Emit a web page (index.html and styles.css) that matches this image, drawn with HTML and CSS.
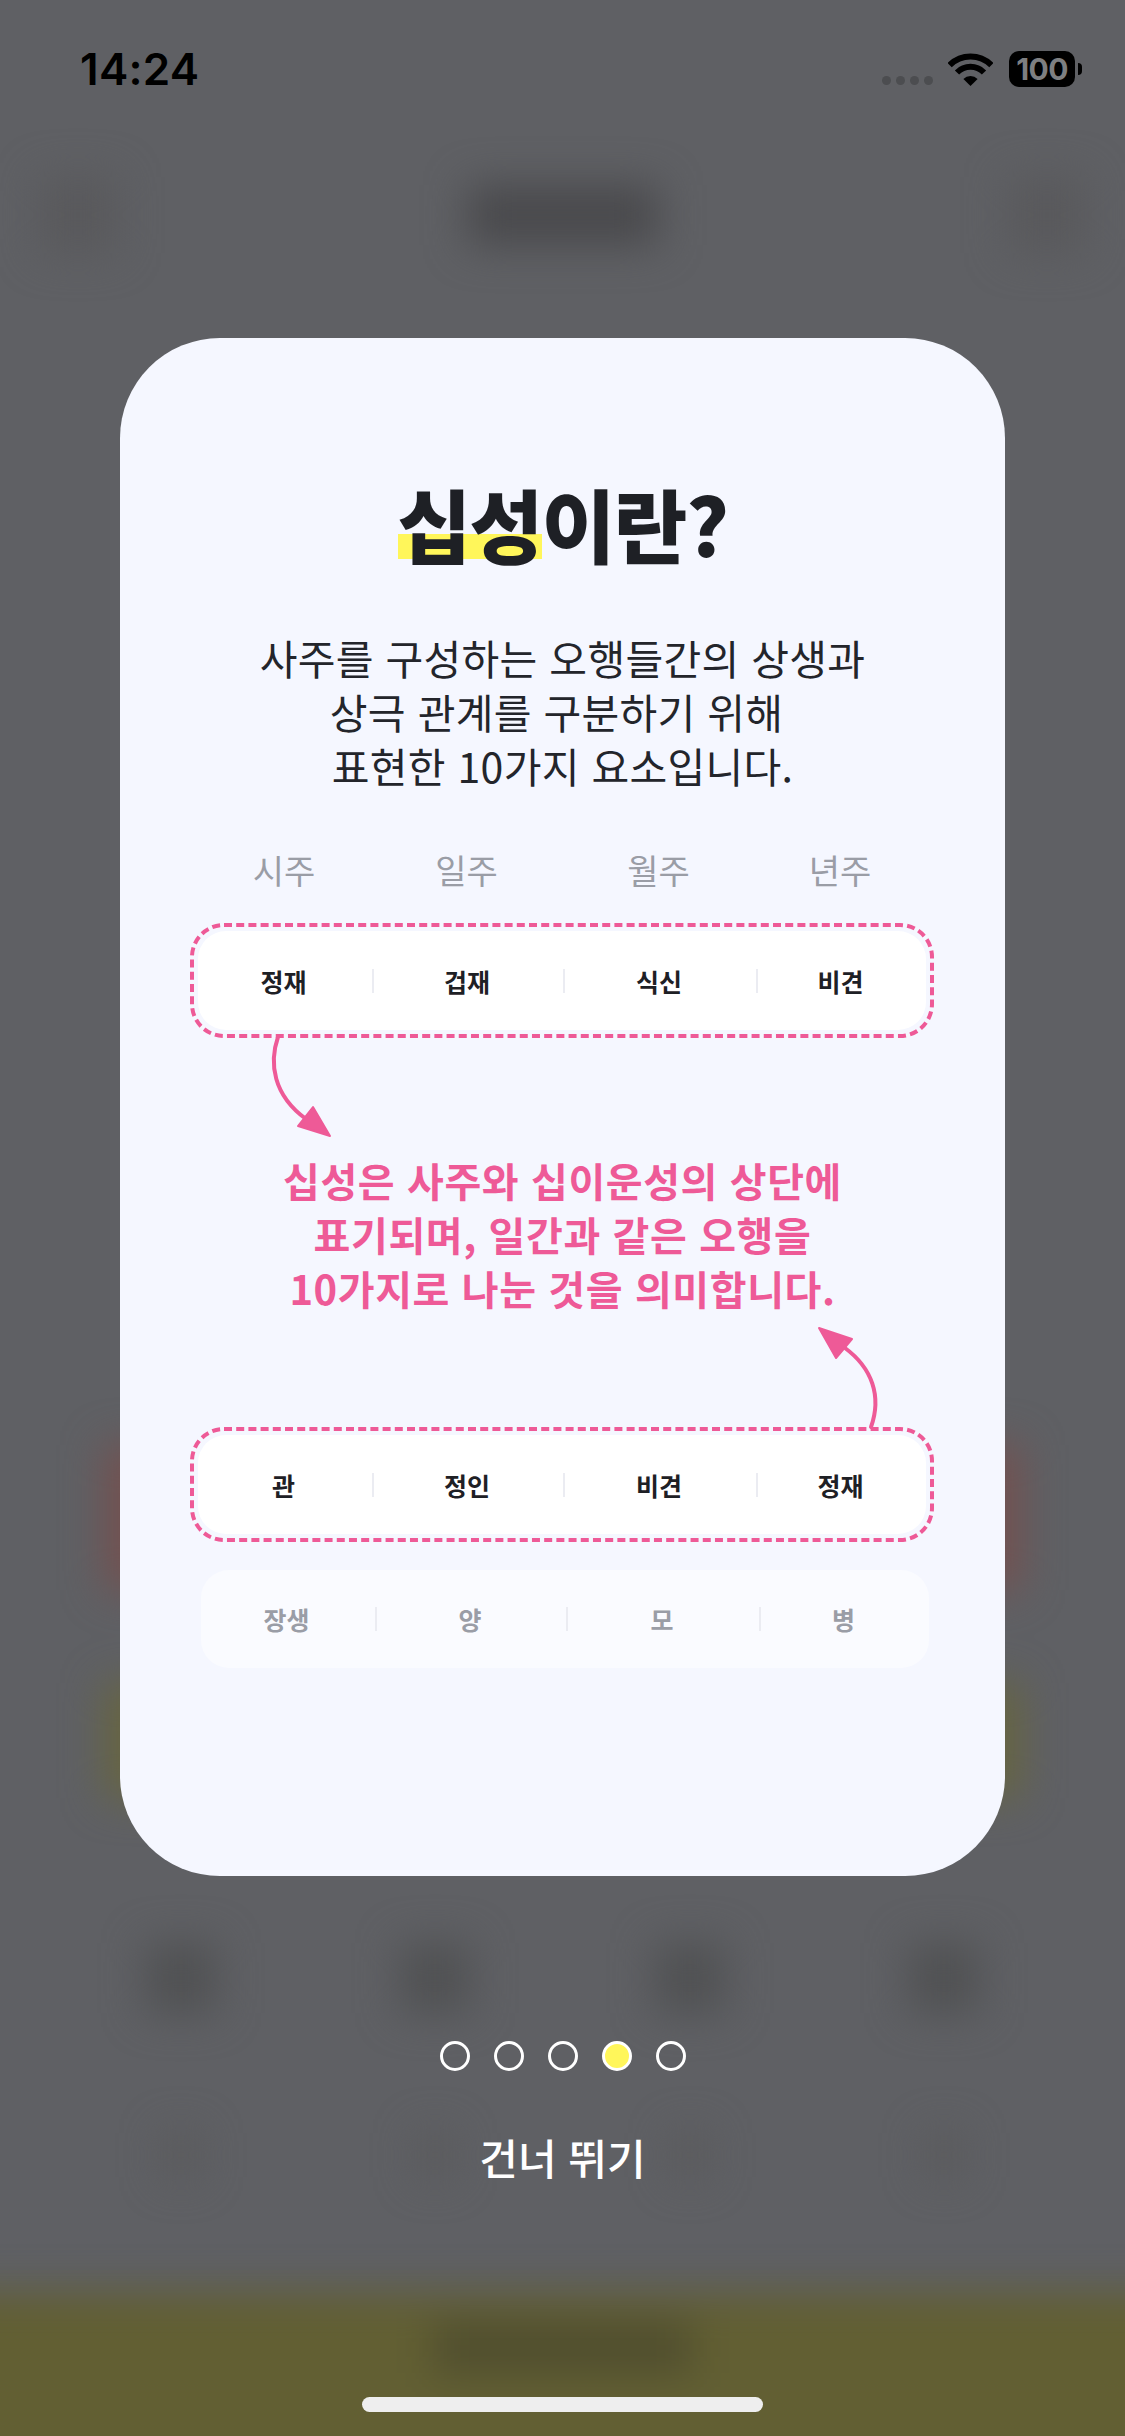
FILE: index.html
```html
<!DOCTYPE html>
<html lang="ko">
<head>
<meta charset="utf-8">
<title>십성이란?</title>
<link rel="stylesheet" href="styles.css">
</head>
<body>
<div class="screen">
  <div class="backdrop">
    <div class="bd-header"><i class="bd-side"></i><i class="bd-title"></i><i class="bd-side"></i></div>
    <div class="bd-card bd-red"></div>
    <div class="bd-card bd-yellow"></div>
    <div class="bd-row bd-row-a"><i></i><i></i><i></i><i></i></div>
    <div class="bd-row bd-row-b"><i></i><i></i><i></i><i></i></div>
    <div class="bd-band"><i></i></div>
  </div>

  <div class="overlay">
    <div class="status">
      <span class="time">14:24</span>
      <div class="status-icons">
        <div class="signal"><i></i><i></i><i></i><i></i></div>
        <svg class="wifi" viewBox="0 0 45 33" aria-hidden="true">
          <path class="wifi-arc" d="M1.6 12.2A29.5 29.5 0 0 1 43.4 12.2"/>
          <path class="wifi-arc" d="M9 19.5A19 19 0 0 1 36 19.5"/>
          <path class="wifi-dot" d="M22.5 33L15.4 25.9A10 10 0 0 1 29.6 25.9Z"/>
        </svg>
        <div class="battery"><span>100</span></div>
        <i class="battery-nub"></i>
      </div>
    </div>

    <main class="card">
      <h1 class="title"><span class="mark">십성</span>이란?</h1>
      <p class="desc">사주를 구성하는 오행들간의 상생과<br>상극 관계를 구분하기 위해&nbsp;<br>표현한 10가지 요소입니다.</p>

      <div class="pillars">
        <span>시주</span><span>일주</span><span>월주</span><span>년주</span>
      </div>

      <div class="frame">
        <svg class="dash" viewBox="0 0 744 115" aria-hidden="true"><rect x="2" y="2" width="740" height="111" rx="32"/></svg>
        <div class="cells">
          <span>정재</span><span>겁재</span><span>식신</span><span>비견</span>
        </div>
      </div>

      <p class="note">십성은 사주와 십이운성의 상단에<br>표기되며, 일간과 같은 오행을<br>10가지로 나눈 것을 의미합니다.</p>

      <div class="frame frame-low">
        <svg class="dash" viewBox="0 0 744 115" aria-hidden="true"><rect x="2" y="2" width="740" height="111" rx="32"/></svg>
        <div class="cells">
          <span>관</span><span>정인</span><span>비견</span><span>정재</span>
        </div>
      </div>

      <div class="cells cells-muted">
        <span>장생</span><span>양</span><span>모</span><span>병</span>
      </div>

      <svg class="arrows" viewBox="0 0 885 1538" aria-hidden="true">
        <path class="arrow-line" d="M158 699C149 725 153 757 186 781"/>
        <path class="arrow-head" d="M193 769L210 798L178 788Z"/>
        <path class="arrow-line" d="M751 1089C762 1058 752 1030 725 1010"/>
        <path class="arrow-head" d="M699 990L732 1001L716 1020Z"/>
      </svg>
    </main>

    <div class="dots"><i></i><i></i><i></i><i class="on"></i><i></i></div>
    <div class="skip">건너 뛰기</div>
    <div class="home"></div>
  </div>
</div>
</body>
</html>
```
FILE: styles.css
```css
* { box-sizing: border-box; }
html, body { margin: 0; padding: 0; }
body { width: 1125px; height: 2436px; overflow: hidden; background: #5f6064; font-family: "Noto Sans CJK KR", "Noto Sans", sans-serif; }
i { display: block; }
.screen { position: relative; width: 1125px; height: 2436px; overflow: hidden; background: #5f6064; }

/* blurred page behind the dialog */
.backdrop { position: absolute; left: -60px; right: -60px; top: 0; bottom: -60px; padding-top: 173px; display: flex; flex-direction: column; filter: blur(20px); }
.bd-header { display: flex; justify-content: space-between; align-items: center; height: 84px; padding: 0 100px; }
.bd-side { width: 76px; height: 76px; background: #59595c; }
.bd-title { width: 190px; height: 60px; background: #49494c; }
.bd-card { margin: 0 165px; }
.bd-red { margin-top: 1188px; height: 145px; background: #74504f; }
.bd-yellow { margin-top: 93px; height: 115px; background: #67653f; }
.bd-row { display: flex; justify-content: space-between; }
.bd-row i { background: #505153; }
.bd-row-a { margin-top: 145px; padding: 0 206px; height: 70px; }
.bd-row-a i { width: 70px; height: 70px; }
.bd-row-b { margin-top: 120px; padding: 0 224px; height: 44px; }
.bd-row-b i { width: 34px; height: 44px; background: #59595b; }
.bd-band { flex: 1; margin-top: 116px; background: #625f33; display: flex; justify-content: center; padding-top: 30px; }
.bd-band i { width: 260px; height: 50px; background: #4f4d2e; }

/* foreground */
.overlay { position: absolute; inset: 0; padding-top: 45px; display: flex; flex-direction: column; }
.status { display: flex; justify-content: space-between; align-items: center; height: 48px; padding: 0 43px 0 80px; }
.time { font-family: "Inter", "Liberation Sans", sans-serif; font-weight: 600; font-size: 44px; letter-spacing: 0.3px; color: #000; line-height: 48px; }
.status-icons { display: flex; align-items: center; }
.signal { display: flex; gap: 5px; margin-top: 22px; margin-right: 15px; }
.signal i { width: 9px; height: 9px; border-radius: 50%; background: #4c4d50; }
.wifi { width: 45px; height: 33px; margin-right: 16px; }
.wifi-arc { fill: none; stroke: #000; stroke-width: 6; }
.wifi-dot { fill: #000; }
.battery { width: 66px; height: 36px; background: #000; border-radius: 10px; display: flex; align-items: center; justify-content: center; }
.battery span { font-family: "Inter", "Liberation Sans", sans-serif; font-weight: 700; font-size: 30px; line-height: 36px; letter-spacing: -0.6px; color: #7e7f81; }
.battery-nub { width: 4px; height: 12px; margin-left: 3px; background: #000; border-radius: 0 6px 6px 0; }

.card { position: relative; align-self: center; width: 885px; height: 1538px; margin-top: 245px; background: #f5f7ff; border-radius: 100px; display: flex; flex-direction: column; align-items: center; }
.title { margin: 134px 0 0; font-size: 80px; line-height: 100px; font-weight: 900; color: #1e2025; letter-spacing: -1.5px; }
.mark { background: linear-gradient(to bottom, transparent 0, transparent 60%, #fff65a 60%, #fff65a 82%, transparent 82%); }
.desc { margin: 58px 0 0; font-size: 41px; line-height: 54px; font-weight: 400; color: #23252b; text-align: center; letter-spacing: 0.3px; }

.pillars { align-self: stretch; margin-top: 53px; display: grid; grid-template-columns: 78px 174px 191px 193px 170px; height: 50px; align-items: center; font-size: 34px; line-height: 50px; color: #9a9da6; text-align: center; }
.pillars span { padding-right: 2px; }
.pillars span:first-child { grid-column: 2; }

.frame { position: relative; align-self: flex-start; margin: 28px 0 0 70px; width: 744px; height: 115px; padding: 8px; }
.frame-low { margin-top: 112px; }
.dash { position: absolute; inset: 0; width: 744px; height: 115px; }
.dash rect { fill: none; stroke: #ee5a97; stroke-width: 4; stroke-dasharray: 8 4.2; }
.cells { display: grid; grid-template-columns: 174px 191px 193px 170px; height: 99px; align-items: center; background: #fff; border-radius: 28px; font-size: 25px; line-height: 32px; font-weight: 700; color: #1e2025; text-align: center; }
.cells span { border-left: 2px solid #ebecf2; height: 24px; line-height: 24px; padding-right: 3px; }
.cells span:first-child { border-left: 0; }

.note { align-self: center; margin: 115px 0 0; height: 162px; font-size: 40px; line-height: 54px; font-weight: 700; color: #ee5a97; text-align: center; letter-spacing: 0.6px; }
.cells-muted { align-self: flex-start; width: 728px; margin: 28px 0 0 81px; background: #fafbff; color: #9a9da6; height: 98px; }

.arrows { position: absolute; inset: 0; width: 885px; height: 1538px; pointer-events: none; }
.arrow-line { fill: none; stroke: #ee5a97; stroke-width: 4; stroke-linecap: round; }
.arrow-head { fill: #ee5a97; stroke: #ee5a97; stroke-width: 2; stroke-linejoin: round; }

.dots { align-self: center; margin-top: 165px; display: flex; gap: 24px; }
.dots i { width: 30px; height: 30px; border-radius: 50%; border: 3px solid #fff; }
.dots i.on { background: #fff65a; }
.skip { align-self: center; margin-top: 56px; height: 60px; font-size: 42px; line-height: 60px; font-weight: 500; color: #fff; }
.home { align-self: center; margin-top: 210px; width: 401px; height: 15px; border-radius: 8px; background: #eeeeee; }
```
